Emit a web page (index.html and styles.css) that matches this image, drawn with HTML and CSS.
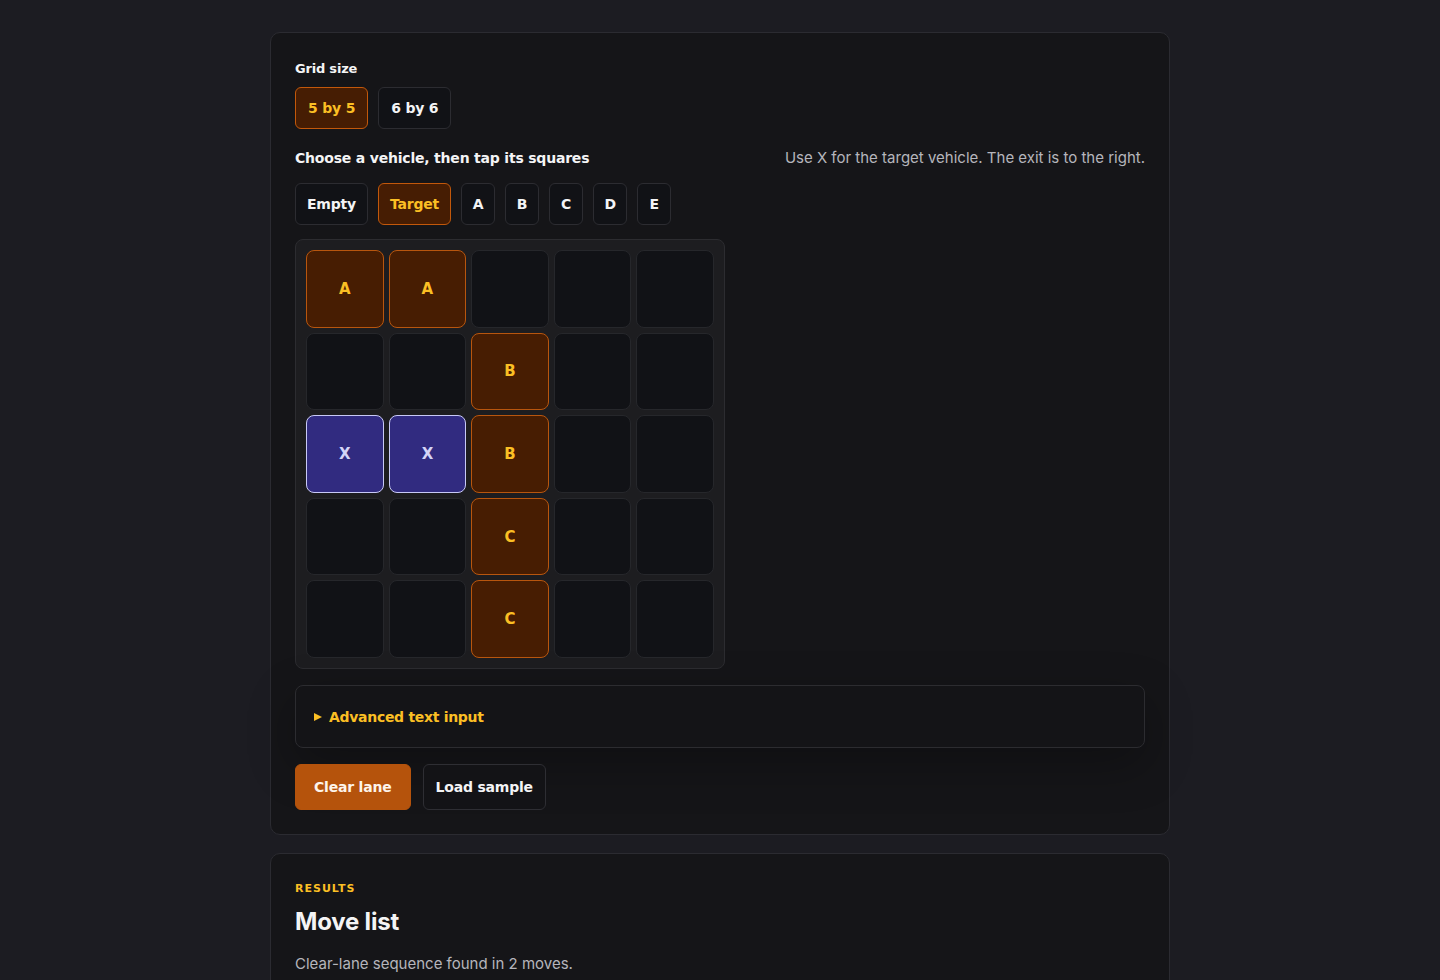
FILE: index.html
```html
<!DOCTYPE html>
<html lang="en">

<head>
    <meta charset="UTF-8">
    <meta name="viewport" content="width=device-width, initial-scale=1.0">
    <title>Clear lane</title>
    <link rel="stylesheet" href="styles.css">
</head>

<body>
    <main class="page">
        <section class="card">
            <h4 class="label">Grid size</h4>
            <div class="btnrow">
                <button class="chip wide active">5 by 5</button>
                <button class="chip wide">6 by 6</button>
            </div>

            <div class="pickhead">
                <h4 class="label">Choose a vehicle, then tap its squares</h4>
                <p class="hint">Use X for the target vehicle. The exit is to the right.</p>
            </div>
            <div class="btnrow">
                <button class="chip">Empty</button>
                <button class="chip active">Target</button>
                <button class="chip small">A</button>
                <button class="chip small">B</button>
                <button class="chip small">C</button>
                <button class="chip small">D</button>
                <button class="chip small">E</button>
            </div>

            <div class="board">
                <div class="cell car">A</div>
                <div class="cell car">A</div>
                <div class="cell"></div>
                <div class="cell"></div>
                <div class="cell"></div>

                <div class="cell"></div>
                <div class="cell"></div>
                <div class="cell car">B</div>
                <div class="cell"></div>
                <div class="cell"></div>

                <div class="cell target">X</div>
                <div class="cell target">X</div>
                <div class="cell car">B</div>
                <div class="cell"></div>
                <div class="cell"></div>

                <div class="cell"></div>
                <div class="cell"></div>
                <div class="cell car">C</div>
                <div class="cell"></div>
                <div class="cell"></div>

                <div class="cell"></div>
                <div class="cell"></div>
                <div class="cell car">C</div>
                <div class="cell"></div>
                <div class="cell"></div>
            </div>

            <details class="advanced">
                <summary>Advanced text input</summary>
            </details>

            <div class="actions">
                <button class="primary">Clear lane</button>
                <button class="secondary">Load sample</button>
            </div>
        </section>

        <section class="card">
            <div class="eyebrow">Results</div>
            <h2 class="title">Move list</h2>
            <p class="summary">Clear-lane sequence found in 2 moves.</p>
        </section>
    </main>
</body>

</html>
```

FILE: styles.css
```css
* {
    margin: 0;
    padding: 0;
    box-sizing: border-box;
}
body {
    background-color: #1c1c22;
    color: #f4f4f5;
    font-family: Inter, "Noto Sans", sans-serif;
}
.page {
    width: 900px;
    margin: 0 auto;
    padding-top: 32px;
    display: flex;
    flex-direction: column;
    gap: 18px;
}
.card {
    background-color: #151518;
    border: 1px solid #2b2b31;
    border-radius: 10px;
    padding: 24px 24px 24px 24px;
}
.label {
    font-family: "DejaVu Sans", sans-serif;
    font-size: 13px;
    font-weight: bold;
    color: #f4f4f5;
    letter-spacing: -0.2px;
}
.card > .label {
    margin-top: 4px;
}
.btnrow {
    display: flex;
    gap: 10px;
    margin-top: 11px;
}
.chip {
    height: 42px;
    padding: 0 11px;
    background-color: #111216;
    border: 1px solid #2c2c31;
    border-radius: 6px;
    color: #f4f4f5;
    font-family: "DejaVu Sans", sans-serif;
    font-size: 14px;
    font-weight: bold;
    letter-spacing: -0.2px;
}
.chip.wide {
    padding: 0 12px;
}
.chip.small {
    width: 34px;
    padding: 0;
}
.chip.active {
    background-color: #461d03;
    border-color: #c2580b;
    color: #fbbf24;
}
.pickhead {
    display: flex;
    justify-content: space-between;
    align-items: baseline;
    margin-top: 19px;
    margin-bottom: 16px;
}
.pickhead .label {
    font-size: 14px;
}
.pickhead + .btnrow {
    margin-top: 0;
}
.hint {
    font-size: 15px;
    color: #b5b5bc;
}
.board {
    width: 430px;
    margin-top: 14px;
    padding: 10px;
    background-color: #1d1d20;
    border: 1px solid #2c2c30;
    border-radius: 8px;
    display: grid;
    grid-template-columns: repeat(5, 1fr);
    gap: 5px;
}
.cell {
    aspect-ratio: 1;
    background-color: #111216;
    border: 1px solid #26272b;
    border-radius: 8px;
    display: flex;
    align-items: center;
    justify-content: center;
    font-family: "DejaVu Sans", sans-serif;
    font-size: 15px;
    font-weight: bold;
}
.cell.car {
    background-color: #471d02;
    border-color: #b8560e;
    color: #fbbf24;
}
.cell.target {
    background-color: #312b80;
    border-color: #c8c9f6;
    color: #d4d4f7;
}
.advanced {
    margin-top: 16px;
    background-color: #141417;
    border: 1px solid #2c2c30;
    border-radius: 8px;
    box-shadow: 0 16px 48px rgba(0, 0, 0, 0.28);
}
.advanced summary {
    list-style: none;
    height: 61px;
    padding: 0 18px;
    display: flex;
    align-items: center;
    gap: 7px;
    color: #fbbf24;
    font-family: "DejaVu Sans", sans-serif;
    font-size: 14px;
    font-weight: bold;
    letter-spacing: -0.3px;
    cursor: pointer;
}
.advanced summary::before {
    content: "";
    border-left: 8px solid #fbbf24;
    border-top: 4.5px solid transparent;
    border-bottom: 4.5px solid transparent;
}
.actions {
    display: flex;
    gap: 12px;
    margin-top: 16px;
}
.primary, .secondary {
    height: 46px;
    padding: 0 18px;
    border-radius: 6px;
    font-family: "DejaVu Sans", sans-serif;
    font-size: 14px;
    font-weight: bold;
    letter-spacing: -0.2px;
}
.primary {
    background-color: #b5530c;
    border: 1px solid #b5530c;
    color: #fdf4ea;
}
.secondary {
    background-color: #131316;
    border: 1px solid #2e2e33;
    color: #f4f4f5;
    padding: 0 12px;
}
.eyebrow {
    margin-top: 4px;
    font-family: "DejaVu Sans", sans-serif;
    font-size: 11px;
    font-weight: bold;
    letter-spacing: 1px;
    text-transform: uppercase;
    color: #fbbf24;
}
.title {
    margin-top: 12px;
    font-family: Inter, sans-serif;
    font-size: 24px;
    font-weight: 700;
    letter-spacing: -0.2px;
}
.summary {
    margin-top: 18px;
    font-size: 15px;
    color: #b5b5bc;
}
```
